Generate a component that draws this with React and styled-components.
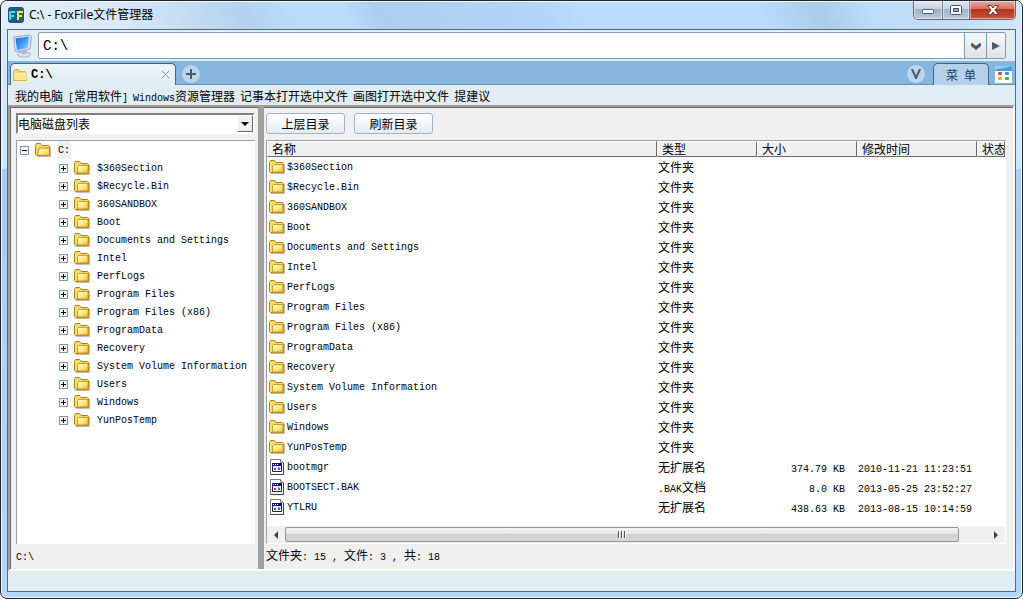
import React from "react";
import styled, { createGlobalStyle, css } from "styled-components";

const folders = [
  "$360Section",
  "$Recycle.Bin",
  "360SANDBOX",
  "Boot",
  "Documents and Settings",
  "Intel",
  "PerfLogs",
  "Program Files",
  "Program Files (x86)",
  "ProgramData",
  "Recovery",
  "System Volume Information",
  "Users",
  "Windows",
  "YunPosTemp",
];

const files = [
  { name: "bootmgr", type: "无扩展名", size: "374.79 KB", date: "2010-11-21 11:23:51" },
  { name: "BOOTSECT.BAK", type: ".BAK文档", size: "8.0 KB", date: "2013-05-25 23:52:27" },
  { name: "YTLRU", type: "无扩展名", size: "438.63 KB", date: "2013-08-15 10:14:59" },
];

const links = [
  "我的电脑",
  "[常用软件]",
  "Windows资源管理器",
  "记事本打开选中文件",
  "画图打开选中文件",
  "提建议",
];

// latin runs are set in a half width face so two letters fill one Chinese glyph
const Text = ({ children }) =>
  children
    .split(/([\u0020-\u007e]+)/)
    .filter(Boolean)
    .map((part, i) =>
      /^[\u0020-\u007e]/.test(part) ? <Half key={i}>{part}</Half> : part
    );

const FolderIcon = ({ open }) => (
  <svg width="16" height="16" viewBox="0 0 16 16" aria-hidden="true">
    <defs>
      <linearGradient id="folderFill" x1="0" y1="0" x2="1" y2="1">
        <stop offset="0" stopColor="#fffbd0" />
        <stop offset="0.5" stopColor="#fde98a" />
        <stop offset="1" stopColor="#f0c02c" />
      </linearGradient>
    </defs>
    <path d="M2 14.5h13.5V5" fill="none" stroke="#8d8d8d" strokeOpacity="0.6" />
    <path
      d="M.5 12.5v-9l1-2h4l1.5 2h6.5l1 1v9h-13z"
      fill="#f8dc72"
      stroke="#b8810f"
    />
    {open ? (
      <path d="M2.5 13.5l1-6.5 1.5-1h9.5v7.5z" fill="url(#folderFill)" stroke="#c08a12" />
    ) : (
      <path d="M3.5 13V6.5l1-1h9.5v7.5z" fill="url(#folderFill)" stroke="#d09c22" />
    )}
  </svg>
);

const TabFolderIcon = () => (
  <svg width="16" height="16" viewBox="0 0 16 16" aria-hidden="true">
    <path d="M1.500 13.500v-10l1-1h4l1 2h6l1 1v8z" fill="#f5d468" stroke="#e0b440" />
    <path d="M2 13V7l1.500-1h11v7z" fill="#fbe88c" />
    <path d="M3 7h11" stroke="#fff6c4" />
  </svg>
);

const FileIcon = () => (
  <svg width="16" height="16" viewBox="0 0 16 16" aria-hidden="true">
    <path d="M1.500.5h10l3 3v12h-13z" fill="#fff" stroke="#7c7c7c" />
    <path d="M11.500.5v3h3" fill="#e4e4e4" stroke="#7c7c7c" />
    <path d="M14.500 4v11.500h-13" fill="none" stroke="#444" />
    <path d="M3.500 4.500h9v8h-9z" fill="#fff" stroke="#1c1c60" />
    <path d="M3 4h10v3H3z" fill="#10107c" />
    <path d="M4 5.500h1M6 5.500h1M8 5.500h1" stroke="#fff" />
    <path d="M5 9h2v2H5z" fill="#e02020" />
    <path d="M9 8h1v1h1v2h-2z" fill="#2a6fd8" />
  </svg>
);

const LogoIcon = () => (
  <svg width="16" height="16" viewBox="0 0 16 16" aria-hidden="true">
    <rect x=".5" y=".5" width="15" height="15" rx="2" fill="#1f5c87" stroke="#2c506c" />
    <path d="M1 4h6v2H3v2h3v2H3v3H1z" fill="#18f0f0" />
    <path d="M9 4h6v2h-4v2h3v2h-3v3H9z" fill="#f6f61c" />
  </svg>
);

const ComputerIcon = () => (
  <svg width="20" height="24" viewBox="0 0 20 24" aria-hidden="true">
    <defs>
      <linearGradient id="screen" x1="0" y1="0" x2="1" y2="1">
        <stop offset="0" stopColor="#1a62d8" />
        <stop offset="0.5" stopColor="#3f9cf4" />
        <stop offset="1" stopColor="#9be0ff" />
      </linearGradient>
    </defs>
    <ellipse cx="11" cy="20.500" rx="6.500" ry="2.500" fill="#e4e6f4" stroke="#a3a9cc" />
    <path d="M8 16l6 -1v5l-5 .5z" fill="#b4b9da" />
    <path d="M.8 3l15.700-2 2 1.500-1.500 12.500-13 3-2-1z" fill="#dfe3f4" stroke="#9da6cc" />
    <path d="M2.500 4.500l13.500-2-1.500 11.500-10.500 2.500z" fill="url(#screen)" />
  </svg>
);

const GridIcon = () => (
  <svg width="17" height="17" viewBox="0 0 17 17" aria-hidden="true">
    <path d="M0 0h17v17H0z" fill="#fbfdff" />
    <path d="M0 0h17v5H0z" fill="#3f9eea" />
    <path d="M0 0h17L0 4z" fill="#8ccdfa" />
    <rect x="3" y="6" width="4" height="3" rx="1" fill="#e24a3a" />
    <rect x="10" y="6" width="4" height="3" rx="1" fill="#3f8ad8" />
    <rect x="3" y="11" width="4" height="3" rx="1" fill="#f2b020" />
    <rect x="10" y="11" width="4" height="3" rx="1" fill="#4cae3c" />
  </svg>
);

const Glyph = ({ d, size = 10, width = 2, color = "#4b5a68" }) => (
  <svg width={size} height={size} viewBox="0 0 10 10" aria-hidden="true">
    <path d={d} fill="none" stroke={color} strokeWidth={width} />
  </svg>
);

const Arrow = ({ d, color = "#000" }) => (
  <svg width="8" height="8" viewBox="0 0 8 8" aria-hidden="true">
    <path d={d} fill={color} />
  </svg>
);

const TreeToggle = ({ open }) => (
  <PlainButton aria-label={open ? "collapse" : "expand"}>
    <svg width="9" height="9" viewBox="0 0 9 9" aria-hidden="true">
      <rect x=".5" y=".5" width="8" height="8" fill="#f6f6f4" stroke="#7898b5" />
      <path d={open ? "M2 4.500h5" : "M2 4.500h5M4.500 2v5"} stroke="#000" />
    </svg>
  </PlainButton>
);

const App = () => {
  const rows = [...folders.map((name) => ({ name, type: "文件夹", folder: true })), ...files];

  return (
    <Frame>
      <GlobalStyle />
      <TitleBar>
        <LogoIcon />
        <Title>C:\ - FoxFile文件管理器</Title>
        <WindowButtons>
          <WindowButton aria-label="minimize" $width={28}>
            <svg width="14" height="12" viewBox="0 0 14 12" aria-hidden="true">
              <rect x="1.500" y="5.500" width="11" height="4" rx="1" fill="#fff" stroke="#535666" />
            </svg>
          </WindowButton>
          <WindowButton aria-label="maximize" $width={27}>
            <svg width="14" height="12" viewBox="0 0 14 12" aria-hidden="true">
              <rect x="1.500" y="1.500" width="11" height="9" rx="1" fill="#fff" stroke="#535666" />
              <rect x="4.500" y="4.500" width="5" height="3" fill="#8fa9c4" stroke="#535666" />
            </svg>
          </WindowButton>
          <WindowButton aria-label="close" $width={46} $close>
            <svg width="14" height="12" viewBox="0 0 14 12" aria-hidden="true">
              <path
                d="M1.500 1.500h3.500l2 2.500 2-2.500h3.500l-3.500 4.500 3.500 4.500h-3.500l-2-2.500-2 2.500h-3.500l3.500-4.500z"
                fill="#fff"
                stroke="#5a3c48"
              />
            </svg>
          </WindowButton>
        </WindowButtons>
      </TitleBar>
      <Client>
        <AddressRow>
          <ComputerIcon />
          <AddressBox>
            <AddressInput aria-label="address" defaultValue="C:\" />
            <AddressButton aria-label="history" $width={22}>
              <Glyph d="M0 3l5 4 5-4" width={3} />
            </AddressButton>
            <AddressButton aria-label="go" $width={19}>
              <Arrow d="M0 0l8 4-8 4z" color="#4b5a68" />
            </AddressButton>
          </AddressBox>
        </AddressRow>
        <TabStrip>
          <Tab>
            <TabFolderIcon />
            <TabName>C:\</TabName>
            <PlainButton aria-label="close tab">
              <Glyph d="M1 1l8 8M9 1l-8 8" size={9} width={1} color="#7d8c9a" />
            </PlainButton>
          </Tab>
          <RoundButton aria-label="new tab">
            <Glyph d="M5 0v10M0 5h10" />
          </RoundButton>
          <Spacer />
          <RoundButton aria-label="view">
            <Glyph d="M1 0l4 9 4-9" />
          </RoundButton>
          <MenuTab>
            <Text>菜 单</Text>
          </MenuTab>
          <PlainButton aria-label="layout">
            <GridIcon />
          </PlainButton>
        </TabStrip>
        <LinkBar>
          {links.map((link) => (
            <a key={link} href="#open">
              <Text>{link}</Text>
            </a>
          ))}
        </LinkBar>
        <Panels>
          <Sidebar>
            <Drives>
              <select aria-label="drives">
                <option>电脑磁盘列表</option>
              </select>
              <DriveArrow>
                <Arrow d="M0 2h8l-4 4z" />
              </DriveArrow>
            </Drives>
            <Tree>
              <TreeRow $root>
                <TreeToggle open />
                <FolderIcon open />
                <EntryName $selected>C:</EntryName>
              </TreeRow>
              {folders.map((name) => (
                <TreeRow key={name}>
                  <TreeToggle />
                  <FolderIcon />
                  <EntryName>{name}</EntryName>
                </TreeRow>
              ))}
            </Tree>
            <Status>
              <Text>C:\</Text>
            </Status>
          </Sidebar>
          <Splitter />
          <Main>
            <Toolbar>
              <ToolButton>上层目录</ToolButton>
              <ToolButton>刷新目录</ToolButton>
            </Toolbar>
            <List>
              <ListBody>
                <Table>
                  <colgroup>
                    <col />
                    <Col $width={100} />
                    <Col $width={100} />
                    <Col $width={120} />
                    <Col $width={28} />
                  </colgroup>
                  <thead>
                    <tr>
                      <th>名称</th>
                      <th>类型</th>
                      <th>大小</th>
                      <th>修改时间</th>
                      <th>状态</th>
                    </tr>
                  </thead>
                  <tbody>
                    {rows.map((row) => (
                      <tr key={row.name}>
                        <td>
                          <Name>
                            {row.folder ? <FolderIcon /> : <FileIcon />}
                            <EntryName>{row.name}</EntryName>
                          </Name>
                        </td>
                        <td>
                          <Text>{row.type}</Text>
                        </td>
                        <SizeCell>{row.size && <Text>{row.size}</Text>}</SizeCell>
                        <td>{row.date && <Text>{row.date}</Text>}</td>
                        <td />
                      </tr>
                    ))}
                  </tbody>
                </Table>
              </ListBody>
              <ScrollBar>
                <ScrollButton aria-label="scroll left">
                  <Arrow d="M6 0v8L2 4z" color="#444" />
                </ScrollButton>
                <Track>
                  <Thumb>
                    <svg width="8" height="7" viewBox="0 0 8 7" aria-hidden="true">
                      <path d="M.5 0v7M3.500 0v7M6.500 0v7" stroke="#555" />
                      <path d="M1.500 0v7M4.500 0v7M7.500 0v7" stroke="#fff" />
                    </svg>
                  </Thumb>
                </Track>
                <ScrollButton aria-label="scroll right">
                  <Arrow d="M2 0l4 4-4 4z" color="#444" />
                </ScrollButton>
              </ScrollBar>
            </List>
            <Status>
              <Text>{"文件夹: 15 , 文件: 3 , 共: 18"}</Text>
            </Status>
          </Main>
        </Panels>
        <Footer />
      </Client>
    </Frame>
  );
};

const GlobalStyle = createGlobalStyle`
  * {
    box-sizing: border-box;
  }
  body {
    margin: 0;
    background: #fff;
    color: #000;
    font: 12px/18px "Noto Sans CJK SC", sans-serif;
  }
  button {
    display: flex;
    align-items: center;
    justify-content: center;
    flex: none;
    padding: 0;
    font: inherit;
    color: inherit;
  }
  svg {
    flex: none;
    display: block;
  }
`;

const Half = styled.span`
  font-family: "Liberation Mono", monospace;
  font-size: 10px;
  line-height: 10px;
  white-space: pre;
`;

const Frame = styled.div`
  display: flex;
  flex-direction: column;
  height: 100vh;
  padding: 0 6px 6px;
  border: 1px solid #20242e;
  border-radius: 7px;
  box-shadow: inset 0 0 0 1px #eaf5ff;
  background: linear-gradient(180deg, #d6e9fb 0, #d0e6fc 168px, #a9cdf3 168px, #b4d6f9 100%);
`;

const TitleBar = styled.div`
  display: flex;
  align-items: center;
  height: 28px;
  margin: 0 -5px;
  padding: 0 5px 0 6px;
  border-radius: 6px 6px 0 0;
  box-shadow: inset 0 1px 0 #f2f9ff;
  background: linear-gradient(
    65deg,
    #e2effb 0,
    #d8e9fa 12%,
    #b4d2ee 24%,
    #bcdcfc 29%,
    #bcdcfc 34%,
    #aecdf0 37%,
    #b3d5f9 53%,
    #bbdcfd 57%,
    #bbdcfd 74%,
    #a9cce9 80%,
    #bcddfb 85%,
    #c8dcf2 92%,
    #d4e7fa 100%
  );
`;

const Title = styled.span`
  flex: 1;
  padding-left: 5px;
  font-family: "Noto Sans", "Noto Sans CJK SC", sans-serif;
`;

const WindowButtons = styled.div`
  display: flex;
  align-self: flex-start;
  height: 19px;
  border: 1px solid #5c6878;
  border-top: 0;
  border-radius: 0 0 5px 5px;
  overflow: hidden;
`;

const WindowButton = styled.button`
  width: ${(props) => props.$width}px;
  border: 0;
  box-shadow: inset 0 0 0 1px rgba(255, 255, 255, 0.5);
  background: linear-gradient(#dde8f3 0, #c3d2e2 45%, #9db1c6 46%, #b9cbdc 100%);
  & + & {
    border-left: 1px solid #6c7888;
  }
  ${(props) =>
    props.$close &&
    css`
      background: linear-gradient(#e6a79b 0, #d0705f 45%, #b8321c 46%, #c9553a 100%);
    `}
`;

const Client = styled.div`
  display: flex;
  flex-direction: column;
  flex: 1;
  min-height: 0;
  border: 1px solid #56697a;
  background: #e0edf3;
`;

const AddressRow = styled.div`
  display: flex;
  align-items: center;
  gap: 5px;
  height: 31px;
  padding: 0 9px 0 5px;
`;

const AddressBox = styled.div`
  display: flex;
  flex: 1;
  height: 27px;
  border: 1px solid #7f9db9;
  border-radius: 2px;
  background: #fff;
`;

const AddressInput = styled.input`
  flex: 1;
  min-width: 0;
  padding: 0 4px;
  border: 0;
  outline: 0;
  background: transparent;
  font: 14px "Liberation Mono", monospace;
`;

const AddressButton = styled.button`
  width: ${(props) => props.$width}px;
  border: 0;
  border-left: 1px solid #7f9db9;
  background: linear-gradient(#f8f8f8, #dfe2e8);
`;

const TabStrip = styled.div`
  display: flex;
  align-items: center;
  height: 24px;
  padding: 2px 3px 0 2px;
  background: #86b5df;
  box-shadow: inset 0 -1px 0 #6f8fb0;
`;

const Tab = styled.div`
  display: flex;
  align-items: center;
  align-self: stretch;
  width: 166px;
  margin-right: 6px;
  padding: 0 5px 0 1px;
  border: 1px solid #336a96;
  border-bottom: 0;
  border-radius: 5px 5px 0 0;
  background: linear-gradient(#edf5f8, #e0edf3);
`;

const TabName = styled.span`
  flex: 1;
  padding-left: 3px;
  font: bold 12px "Liberation Mono", monospace;
`;

const PlainButton = styled.button`
  border: 0;
  background: none;
`;

const RoundButton = styled.button`
  width: 18px;
  height: 18px;
  border: 0;
  border-radius: 50%;
  background: #bcd5ec;
`;

const Spacer = styled.div`
  flex: 1;
`;

const MenuTab = styled.button`
  && {
    display: block;
  }
  align-self: stretch;
  width: 56px;
  margin: 0 6px 0 8px;
  border: 1px solid #336a96;
  border-bottom: 0;
  border-radius: 5px 5px 0 0;
  background: #b4d0eb;
  color: #1f3d5c;
`;

const LinkBar = styled.nav`
  display: flex;
  align-items: center;
  gap: 5px;
  height: 20px;
  padding: 2px 7px 0;
  a {
    color: inherit;
    text-decoration: none;
    white-space: nowrap;
  }
`;

const Panels = styled.div`
  display: flex;
  flex: 1;
  min-height: 0;
  border: 2px solid #fff;
  border-color: #a0a0a0 #fff #fff #a0a0a0;
  box-shadow: inset 1px 1px 0 #696969;
  background: #f0f0f0;
`;

const Sidebar = styled.div`
  display: flex;
  flex-direction: column;
  width: 248px;
  padding: 6px 3px 0 6px;
`;

const Drives = styled.div`
  display: flex;
  height: 21px;
  margin-bottom: 6px;
  border: 2px solid #696969;
  border-color: #808080 #fff #fff #808080;
  background: #fff;
  select {
    flex: 1;
    min-width: 0;
    padding: 0;
    border: 0;
    outline: 0;
    appearance: none;
    background: transparent;
    color: #000;
    font: inherit;
    line-height: 16px;
  }
`;

const DriveArrow = styled.span`
  display: flex;
  align-items: center;
  justify-content: center;
  width: 16px;
  border: 1px solid #fff;
  border-color: #fff #696969 #696969 #fff;
  background: #f0f0f0;
`;

const Tree = styled.div`
  flex: 1;
  min-height: 0;
  overflow: hidden;
  border: 1px solid #a0a0a0;
  border-right: 0;
  border-bottom: 0;
  background: #fff;
`;

const TreeRow = styled.div`
  display: flex;
  align-items: center;
  gap: 6px;
  height: 18px;
  padding-left: ${(props) => (props.$root ? 3 : 42)}px;
`;

const EntryName = styled.span`
  padding: 2px 1px 0;
  white-space: pre;
  font: 10px/16px "Liberation Mono", monospace;
  background: ${(props) => (props.$selected ? "#f0f0f0" : "transparent")};
`;

const Splitter = styled.div`
  width: 6px;
  background: #a0a0a0;
`;

const Main = styled.div`
  display: flex;
  flex-direction: column;
  flex: 1;
  min-width: 0;
  padding: 6px 7px 0 2px;
`;

const Toolbar = styled.div`
  display: flex;
  gap: 9px;
  height: 27px;
`;

const ToolButton = styled.button`
  width: 79px;
  height: 21px;
  border: 1px solid #9fb4ca;
  border-radius: 3px;
  background: linear-gradient(#fff, #e2ecf2);
`;

const List = styled.div`
  display: flex;
  flex-direction: column;
  flex: 1;
  min-height: 0;
  border: 1px solid #a0a0a0;
  border-right-color: #fff;
  border-bottom-color: #fff;
  background: #fff;
`;

const ListBody = styled.div`
  flex: 1;
  min-height: 0;
  overflow: hidden;
`;

const Table = styled.table`
  width: 100%;
  table-layout: fixed;
  border-collapse: separate;
  border-spacing: 0;
  th {
    height: 16px;
    padding: 0 0 0 4px;
    border: 1px solid #696969;
    border-top-color: #fff;
    border-left-color: #fff;
    background: #f0f0f0;
    font-weight: normal;
    line-height: 14px;
    text-align: left;
    white-space: nowrap;
    overflow: hidden;
  }
  td {
    height: 20px;
    padding: 0 1px;
    line-height: 18px;
    white-space: nowrap;
  }
`;

const Col = styled.col`
  width: ${(props) => props.$width}px;
`;

const Name = styled.span`
  display: flex;
  align-items: center;
  gap: 1px;
  padding-left: 1px;
`;

const SizeCell = styled.td`
  && {
    padding-right: 12px;
    text-align: right;
  }
`;

const ScrollBar = styled.div`
  display: flex;
  height: 17px;
  background: #f0f0f0;
`;

const ScrollButton = styled.button`
  width: 18px;
  border: 0;
  background: none;
`;

const Track = styled.div`
  flex: 1;
  padding: 1px 0;
`;

const Thumb = styled.div`
  display: flex;
  align-items: center;
  justify-content: center;
  width: 96%;
  height: 15px;
  border: 1px solid #959595;
  border-radius: 2px;
  background: linear-gradient(#f4f4f4 0, #e6e6e6 45%, #cfcfcf 50%, #d8d8d8 100%);
`;

const Status = styled.div`
  height: 25px;
  line-height: 22px;
`;

const Footer = styled.div`
  height: 20px;
`;

export default App;
